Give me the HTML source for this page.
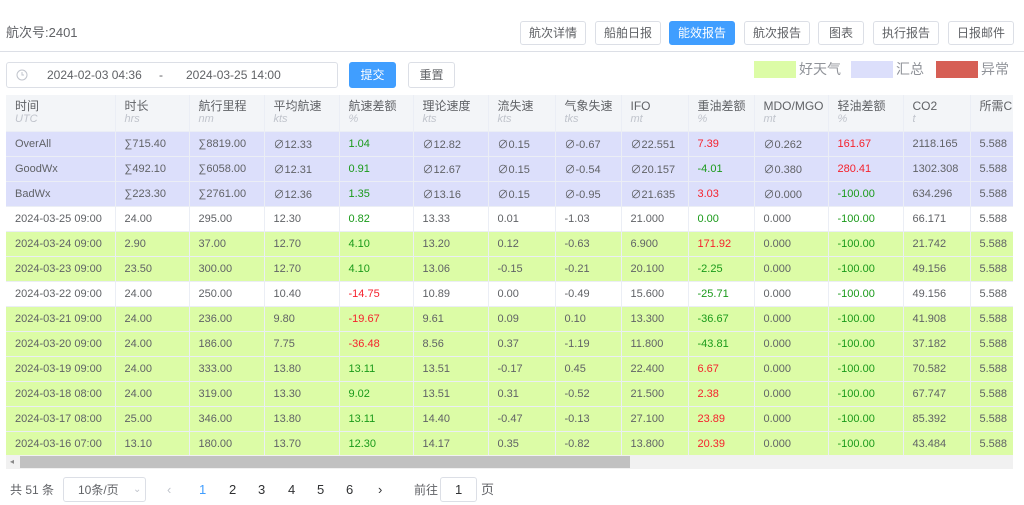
<!DOCTYPE html>
<html><head><meta charset="utf-8"><style>
*{box-sizing:border-box;margin:0;padding:0}
body{width:1024px;height:505px;background:#fff;font-family:"Liberation Sans","Noto Sans CJK SC",sans-serif;color:#606266;position:relative;overflow:hidden;font-size:12px}
.abs{position:absolute;line-height:1.2}
.btn{position:absolute;top:21px;height:24px;border:1px solid #dcdfe6;border-radius:3px;background:#fff;font-size:12px;color:#606266;text-align:center;line-height:22px}
.btn.p{background:#409eff;border-color:#409eff;color:#fff}
.wrap{position:absolute;left:6px;top:95px;width:1007px;height:360px;overflow:hidden}
table{border-collapse:collapse;table-layout:fixed;width:1040px}
td,th{border-right:1px solid #ebeef5;border-bottom:1px solid #ebeef5;padding-left:9px;text-align:left;white-space:nowrap;overflow:hidden;font-weight:normal;font-size:11px}
th{background:#f3f5f8;height:36px;line-height:13px;color:#606266;vertical-align:middle;font-size:12px}
th i{display:block;color:#c0c4cc;font-size:11px}
td{height:25px;color:#606266}
tr.s td{background:#dcdffb}
tr.g td{background:#dcfca6}
.gr{color:#1a9a1a!important}.rd{color:#f5222d!important}
.pg{position:absolute;top:482px;font-size:13px;color:#303133;line-height:16px}
</style></head><body>
<div class="abs" style="left:6px;top:25px;font-size:13px;color:#606266">航次号:2401</div>
<div class="btn" style="left:520px;width:66px">航次详情</div>
<div class="btn" style="left:595px;width:66px">船舶日报</div>
<div class="btn p" style="left:669px;width:66px">能效报告</div>
<div class="btn" style="left:744px;width:66px">航次报告</div>
<div class="btn" style="left:818px;width:46px">图表</div>
<div class="btn" style="left:873px;width:66px">执行报告</div>
<div class="btn" style="left:948px;width:66px">日报邮件</div>
<div class="abs" style="left:0;top:51px;width:1024px;height:1px;background:#dcdfe6"></div>
<div class="abs" style="left:6px;top:62px;width:332px;height:26px;border:1px solid #dcdfe6;border-radius:3px"></div>
<svg class="abs" style="left:16px;top:69px" width="12" height="12" viewBox="0 0 12 12"><circle cx="6" cy="6" r="5" fill="none" stroke="#c0c4cc"/><path d="M6 3v3h2" fill="none" stroke="#c0c4cc"/></svg>
<div class="abs" style="left:47px;top:68px;font-size:12px">2024-02-03 04:36</div>
<div class="abs" style="left:159px;top:68px">-</div>
<div class="abs" style="left:186px;top:68px;font-size:12px">2024-03-25 14:00</div>
<div class="btn p" style="left:349px;top:62px;width:47px;height:26px;line-height:24px">提交</div>
<div class="btn" style="left:408px;top:62px;width:47px;height:26px;line-height:24px">重置</div>
<div class="abs" style="left:754px;top:61px;width:42px;height:17px;background:#dcfca6"></div>
<div class="abs" style="left:799px;top:61px;font-size:14px;color:#909399">好天气</div>
<div class="abs" style="left:851px;top:61px;width:42px;height:17px;background:#dcdffb"></div>
<div class="abs" style="left:896px;top:61px;font-size:14px;color:#909399">汇总</div>
<div class="abs" style="left:936px;top:61px;width:42px;height:17px;background:#d65f55"></div>
<div class="abs" style="left:981px;top:61px;font-size:14px;color:#909399">异常</div>
<div class="wrap"><table>
<colgroup><col style="width:109px"><col style="width:74px"><col style="width:75px"><col style="width:75px"><col style="width:74px"><col style="width:75px"><col style="width:67px"><col style="width:66px"><col style="width:67px"><col style="width:66px"><col style="width:74px"><col style="width:75px"><col style="width:67px"><col style="width:76px"></colgroup>
<tr><th>时间<i>UTC</i></th><th>时长<i>hrs</i></th><th>航行里程<i>nm</i></th><th>平均航速<i>kts</i></th><th>航速差额<i>%</i></th><th>理论速度<i>kts</i></th><th>流失速<i>kts</i></th><th>气象失速<i>tks</i></th><th>IFO<i>mt</i></th><th>重油差额<i>%</i></th><th>MDO/MGO<i>mt</i></th><th>轻油差额<i>%</i></th><th>CO2<i>t</i></th><th>所需CII<i>&nbsp;</i></th></tr>
<tr class="s"><td>OverAll</td><td>∑715.40</td><td>∑8819.00</td><td>∅12.33</td><td class="gr">1.04</td><td>∅12.82</td><td>∅0.15</td><td>∅-0.67</td><td>∅22.551</td><td class="rd">7.39</td><td>∅0.262</td><td class="rd">161.67</td><td>2118.165</td><td>5.588</td></tr>
<tr class="s"><td>GoodWx</td><td>∑492.10</td><td>∑6058.00</td><td>∅12.31</td><td class="gr">0.91</td><td>∅12.67</td><td>∅0.15</td><td>∅-0.54</td><td>∅20.157</td><td class="gr">-4.01</td><td>∅0.380</td><td class="rd">280.41</td><td>1302.308</td><td>5.588</td></tr>
<tr class="s"><td>BadWx</td><td>∑223.30</td><td>∑2761.00</td><td>∅12.36</td><td class="gr">1.35</td><td>∅13.16</td><td>∅0.15</td><td>∅-0.95</td><td>∅21.635</td><td class="rd">3.03</td><td>∅0.000</td><td class="gr">-100.00</td><td>634.296</td><td>5.588</td></tr>
<tr><td>2024-03-25 09:00</td><td>24.00</td><td>295.00</td><td>12.30</td><td class="gr">0.82</td><td>13.33</td><td>0.01</td><td>-1.03</td><td>21.000</td><td class="gr">0.00</td><td>0.000</td><td class="gr">-100.00</td><td>66.171</td><td>5.588</td></tr>
<tr class="g"><td>2024-03-24 09:00</td><td>2.90</td><td>37.00</td><td>12.70</td><td class="gr">4.10</td><td>13.20</td><td>0.12</td><td>-0.63</td><td>6.900</td><td class="rd">171.92</td><td>0.000</td><td class="gr">-100.00</td><td>21.742</td><td>5.588</td></tr>
<tr class="g"><td>2024-03-23 09:00</td><td>23.50</td><td>300.00</td><td>12.70</td><td class="gr">4.10</td><td>13.06</td><td>-0.15</td><td>-0.21</td><td>20.100</td><td class="gr">-2.25</td><td>0.000</td><td class="gr">-100.00</td><td>49.156</td><td>5.588</td></tr>
<tr><td>2024-03-22 09:00</td><td>24.00</td><td>250.00</td><td>10.40</td><td class="rd">-14.75</td><td>10.89</td><td>0.00</td><td>-0.49</td><td>15.600</td><td class="gr">-25.71</td><td>0.000</td><td class="gr">-100.00</td><td>49.156</td><td>5.588</td></tr>
<tr class="g"><td>2024-03-21 09:00</td><td>24.00</td><td>236.00</td><td>9.80</td><td class="rd">-19.67</td><td>9.61</td><td>0.09</td><td>0.10</td><td>13.300</td><td class="gr">-36.67</td><td>0.000</td><td class="gr">-100.00</td><td>41.908</td><td>5.588</td></tr>
<tr class="g"><td>2024-03-20 09:00</td><td>24.00</td><td>186.00</td><td>7.75</td><td class="rd">-36.48</td><td>8.56</td><td>0.37</td><td>-1.19</td><td>11.800</td><td class="gr">-43.81</td><td>0.000</td><td class="gr">-100.00</td><td>37.182</td><td>5.588</td></tr>
<tr class="g"><td>2024-03-19 09:00</td><td>24.00</td><td>333.00</td><td>13.80</td><td class="gr">13.11</td><td>13.51</td><td>-0.17</td><td>0.45</td><td>22.400</td><td class="rd">6.67</td><td>0.000</td><td class="gr">-100.00</td><td>70.582</td><td>5.588</td></tr>
<tr class="g"><td>2024-03-18 08:00</td><td>24.00</td><td>319.00</td><td>13.30</td><td class="gr">9.02</td><td>13.51</td><td>0.31</td><td>-0.52</td><td>21.500</td><td class="rd">2.38</td><td>0.000</td><td class="gr">-100.00</td><td>67.747</td><td>5.588</td></tr>
<tr class="g"><td>2024-03-17 08:00</td><td>25.00</td><td>346.00</td><td>13.80</td><td class="gr">13.11</td><td>14.40</td><td>-0.47</td><td>-0.13</td><td>27.100</td><td class="rd">23.89</td><td>0.000</td><td class="gr">-100.00</td><td>85.392</td><td>5.588</td></tr>
<tr class="g"><td>2024-03-16 07:00</td><td>13.10</td><td>180.00</td><td>13.70</td><td class="gr">12.30</td><td>14.17</td><td>0.35</td><td>-0.82</td><td>13.800</td><td class="rd">20.39</td><td>0.000</td><td class="gr">-100.00</td><td>43.484</td><td>5.588</td></tr>
</table></div>
<div class="abs" style="left:6px;top:455px;width:1007px;height:14px;background:#f1f1f1"></div>
<div class="abs" style="left:20px;top:456px;width:610px;height:12px;background:#c1c1c1"></div>
<div class="abs" style="left:10px;top:457px;font-size:8px;color:#888">◂</div>
<div class="pg" style="left:10px;color:#606266;font-size:12px">共 51 条</div>
<div class="abs" style="left:63px;top:477px;width:83px;height:25px;border:1px solid #dcdfe6;border-radius:3px"></div>
<div class="pg" style="left:78px;color:#606266;font-size:12px">10条/页</div>
<div class="pg" style="left:133px;color:#c0c4cc;font-size:10px">⌄</div>
<div class="pg" style="left:167px;color:#c0c4cc">‹</div>
<div class="pg" style="left:199px;color:#409eff">1</div>
<div class="pg" style="left:229px">2</div>
<div class="pg" style="left:258px">3</div>
<div class="pg" style="left:288px">4</div>
<div class="pg" style="left:317px">5</div>
<div class="pg" style="left:346px">6</div>
<div class="pg" style="left:378px">›</div>
<div class="pg" style="left:414px;color:#606266;font-size:12px">前往</div>
<div class="abs" style="left:440px;top:477px;width:37px;height:25px;border:1px solid #dcdfe6;border-radius:3px"></div>
<div class="pg" style="left:455px">1</div>
<div class="pg" style="left:481px;color:#606266">页</div>
</body></html>
